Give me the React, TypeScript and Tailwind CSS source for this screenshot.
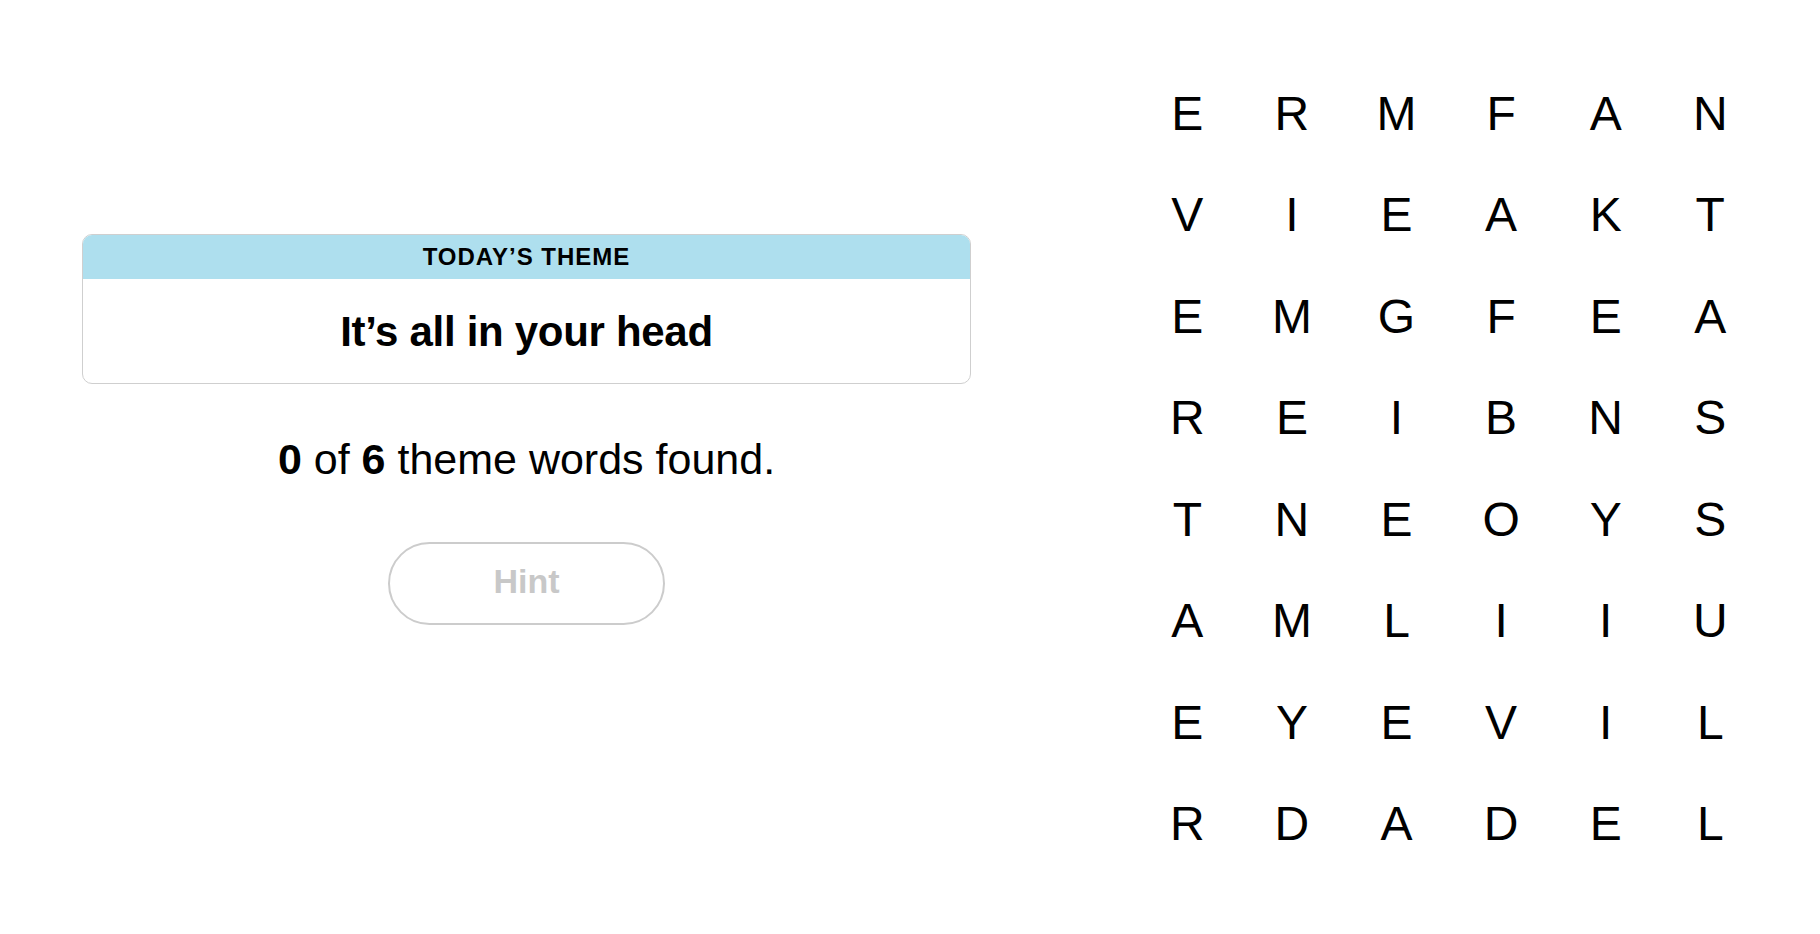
import React from "react";

const ROWS = [
  "ERMFAN",
  "VIEAKT",
  "EMGFEA",
  "REIBNS",
  "TNEOYS",
  "AMLIIU",
  "EYEVIL",
  "RDADEL",
];

export default function App() {
  return (
    <div
      className="flex h-[934px] w-[1820px] bg-white text-black"
      style={{ fontFamily: '"Liberation Sans", Arial, sans-serif' }}
    >
      <div className="ml-[82px] flex w-[889px] flex-col items-center pt-[234px]">
        <div className="w-full overflow-hidden rounded-[10px] border border-[#cfcfcf]">
          <div className="flex h-[44px] items-center justify-center bg-[#aedfee] text-[24px] tracking-[1px] font-semibold leading-none">
            TODAY’S THEME
          </div>
          <div className="flex h-[104px] items-center justify-center text-[42px] font-bold tracking-[-0.3px]">
            It’s all in your head
          </div>
        </div>
        <p className="mt-[50px] text-[43px] leading-[50px]">
          <span className="font-bold">0</span> of <span className="font-bold">6</span> theme words found.
        </p>
        <button className="mt-[58px] flex h-[83px] w-[277px] items-center justify-center rounded-full border-2 border-[#cccccc] pb-[4px] text-[34px] font-bold text-[#c8c8c8]">
          Hint
        </button>
      </div>
      <div className="ml-[164px] pt-[63px]">
        <div className="grid grid-cols-[repeat(6,104.6px)] auto-rows-[101.5px]">
          {ROWS.flatMap((row, r) =>
            row.split("").map((ch, c) => (
              <div
                key={`${r}-${c}`}
                className="flex items-center justify-center text-[48px] leading-none"
              >
                {ch}
              </div>
            ))
          )}
        </div>
      </div>
    </div>
  );
}
